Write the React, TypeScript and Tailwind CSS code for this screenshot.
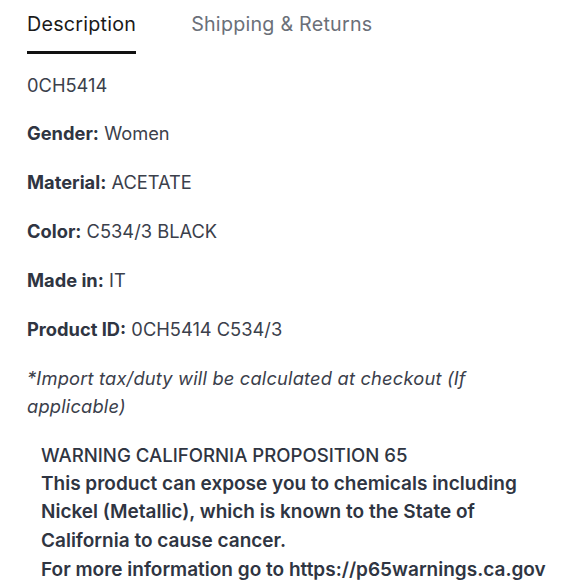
import React from 'react'

const details = [
  { label: 'Gender:', value: 'Women' },
  { label: 'Material:', value: 'ACETATE' },
  { label: 'Color:', value: 'C534/3 BLACK' },
  { label: 'Made in:', value: 'IT' },
  { label: 'Product ID:', value: '0CH5414 C534/3' },
]

export default function App() {
  return (
    <div className="h-[580px] w-[580px] overflow-hidden bg-white font-['Inter',sans-serif] text-[#3b404b]">
      <div className="flex items-start gap-[55px] px-[27px] pt-[10px]">
        <button className="border-b-[3px] border-[#111] pb-[11px] text-[19.7px] tracking-[0.012em] text-[#1a1a1a]">
          Description
        </button>
        <button className="border-b-[3px] border-transparent pb-[11px] text-[19.7px] tracking-[0.012em] text-[#6b7079]">
          Shipping &amp; Returns
        </button>
      </div>

      <div className="px-[27px] pt-[17px] text-[18.3px]">
        <p className="leading-[28px]">0CH5414</p>
        {details.map((d) => (
          <p key={d.label} className="mt-[20.8px] leading-[28px]">
            <span className="font-bold text-[#2f3542]">{d.label}</span> {d.value}
          </p>
        ))}
        <p className="mt-[21.5px] pr-[80px] italic leading-[28px] tracking-[0.01em]">
          *Import tax/duty will be calculated at checkout (If applicable)
        </p>
      </div>

      <div className="pl-[41px] pr-[16px] pt-[21px] text-[19px] font-semibold leading-[28.7px] text-[#2f3542]">
        <p className="text-[18.6px] font-medium">WARNING CALIFORNIA PROPOSITION 65</p>
        <p className="pr-[20px]">
          This product can expose you to chemicals including Nickel (Metallic), which is known to the State of
          California to cause cancer.
        </p>
        <p className="whitespace-nowrap">For more information go to https://p65warnings.ca.gov</p>
      </div>
    </div>
  )
}
